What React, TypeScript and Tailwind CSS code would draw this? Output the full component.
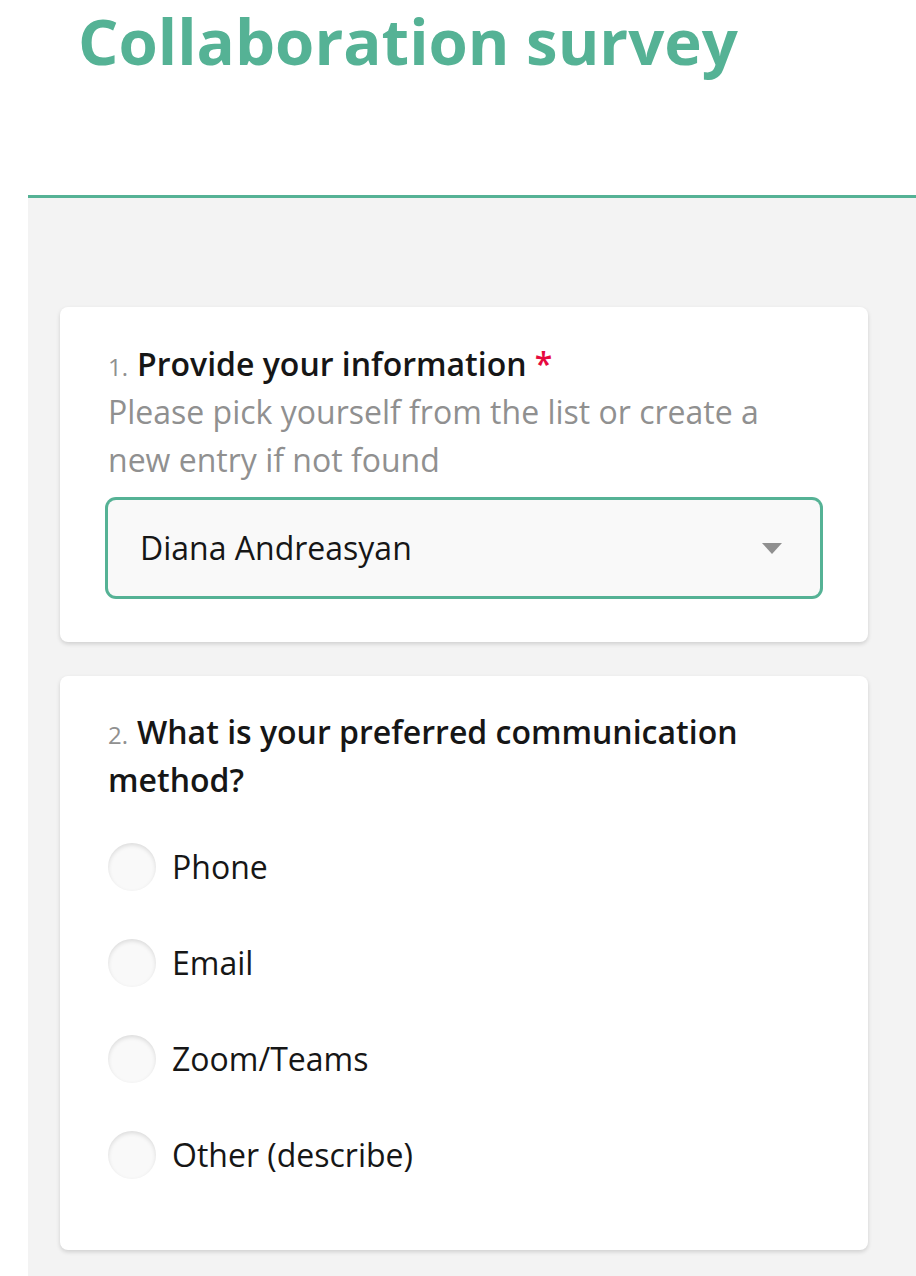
import React from 'react';

const options = ['Phone', 'Email', 'Zoom/Teams', 'Other (describe)'];

function Radio({ label }: { label: string }) {
  return (
    <div className="flex h-[96px] items-center">
      <span className="h-[48px] w-[48px] shrink-0 rounded-full bg-[#f9f9f9] shadow-[inset_0_2px_4px_rgba(0,0,0,0.12)]" />
      <span className="ml-4 text-[32px] leading-[48px] text-[#161616]">{label}</span>
    </div>
  );
}

export default function App() {
  return (
    <div className="flex min-h-screen flex-col bg-white font-['Open_Sans',sans-serif]">
      <div className="ml-[28px] flex flex-1 flex-col">
        <div className="h-[195px] pl-[50px] pt-[9px]">
          <h1 className="text-[63.5px] font-bold leading-[64px] text-[#55b295]">Collaboration survey</h1>
        </div>

        <div className="flex-1 border-t-[3px] border-[#55b295] bg-[#f3f3f3] pl-8 pt-[109px] pb-8">
          <div className="flex w-[808px] flex-col gap-[34px]">
            <div className="rounded-lg bg-white px-12 pt-[33px] pb-[46px] shadow-[0_2px_4px_rgba(0,0,0,0.15)]">
              <div className="text-[32px] font-semibold leading-[48px] text-[#161616]">
                <span className="mr-[9px] text-[24px] font-normal leading-none text-[#909090]">1.</span>
                Provide your information <span className="text-[#e60a3e]">*</span>
              </div>
              <div className="text-[32px] leading-[48px] text-[#909090]">
                Please pick yourself from the list or create a new entry if not found
              </div>
              <div className="mt-4 flex h-[96px] items-center justify-between rounded-lg bg-[#f9f9f9] pl-8 pr-[38px] ring-[3px] ring-[#55b295]">
                <span className="text-[32px] leading-[48px] text-[#161616]">Diana Andreasyan</span>
                <svg width="20" height="11" viewBox="0 0 20 11">
                  <path d="M0 0 H20 L10 11 Z" fill="#909090" />
                </svg>
              </div>
            </div>

            <div className="rounded-lg bg-white px-12 pt-8 pb-[47px] shadow-[0_2px_4px_rgba(0,0,0,0.15)]">
              <div className="text-[32px] font-semibold leading-[48px] text-[#161616]">
                <span className="mr-[9px] text-[24px] font-normal leading-none text-[#909090]">2.</span>
                What is your preferred communication method?
              </div>
              <div className="mt-[15px]">
                {options.map((o) => (
                  <Radio key={o} label={o} />
                ))}
              </div>
            </div>
          </div>
        </div>
      </div>
    </div>
  );
}
